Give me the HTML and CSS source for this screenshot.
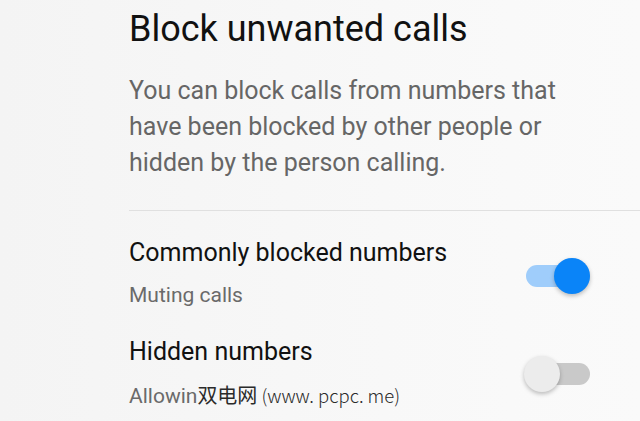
FILE: index.html
```html
<!DOCTYPE html>
<html>
<head>
<meta charset="utf-8">
<link rel="stylesheet" href="styles.css">
</head>
<body>
<div class="page">
  <header class="intro">
    <h1 class="title">Block unwanted calls</h1>
    <p class="desc">You can block calls from numbers that have been blocked by other people or hidden by the person calling.</p>
  </header>
  <div class="divider"></div>
  <div class="setting first">
    <div class="texts">
      <div class="label">Commonly blocked numbers</div>
      <div class="sub">Muting calls</div>
    </div>
    <div class="switch on"><span class="track"></span><span class="thumb"></span></div>
  </div>
  <div class="setting second">
    <div class="texts">
      <div class="label">Hidden numbers</div>
      <div class="sub">Allowin<span class="watermark"><span class="wm-cjk">双电网</span><span class="wm-latin">(www. pcpc. me)</span></span></div>
    </div>
    <div class="switch off"><span class="track"></span><span class="thumb"></span></div>
  </div>
</div>
</body>
</html>
```
FILE: styles.css
```css
html, body {
  margin: 0;
  padding: 0;
}
body {
  width: 640px;
  height: 421px;
  overflow: hidden;
  background: linear-gradient(90deg, #f4f4f4 0%, #f8f8f8 60%, #fafafa 100%);
  font-family: Roboto, "Noto Sans", sans-serif;
}
.page {
  padding-left: 129px;
}
.intro {
  padding-top: 7px;
}
.title {
  margin: 0;
  font-weight: 400;
  font-size: 36px;
  line-height: 44px;
  color: #111;
}
.desc {
  margin: 22px 0 0 0;
  width: 460px;
  font-size: 25px;
  line-height: 36px;
  color: #666;
}
.divider {
  margin-top: 29px;
  height: 1px;
  background: #e0e0e0;
}
.setting {
  display: flex;
  align-items: center;
  justify-content: space-between;
  padding-right: 50px;
}
.texts {
  display: flex;
  flex-direction: column;
}
.label {
  font-size: 25px;
  line-height: 30px;
  color: #111;
}
.sub {
  margin-top: 15px;
  font-size: 21px;
  line-height: 24px;
  color: #6a6a6a;
  white-space: nowrap;
}
.setting.first {
  margin-top: 27px;
}
.setting.second {
  margin-top: 30px;
}
.first .switch { margin-top: 6px; }
.second .switch { margin-top: 2px; }
.watermark {
  color: #2a2a2a;
  font-family: "Noto Sans CJK SC", sans-serif;
}
.wm-cjk {
  font-size: 20px;
}
.wm-latin {
  margin-left: 4px;
  font-size: 18.5px;
  font-weight: 300;
}
.switch {
  position: relative;
  width: 66px;
  height: 36px;
}
.track {
  position: absolute;
  left: 2px;
  right: 0;
  top: 7px;
  height: 22px;
  border-radius: 11px;
}
.thumb {
  position: absolute;
  top: 0;
  width: 36px;
  height: 36px;
  border-radius: 50%;
  box-shadow: 0 2px 4px rgba(0,0,0,0.25);
}
.on .track { background: #9fcdfb; }
.on .thumb { right: 0; background: #0a84f8; }
.off .track { background: #c9c9c9; }
.off .thumb { left: 0; background: #ececec; }
```
